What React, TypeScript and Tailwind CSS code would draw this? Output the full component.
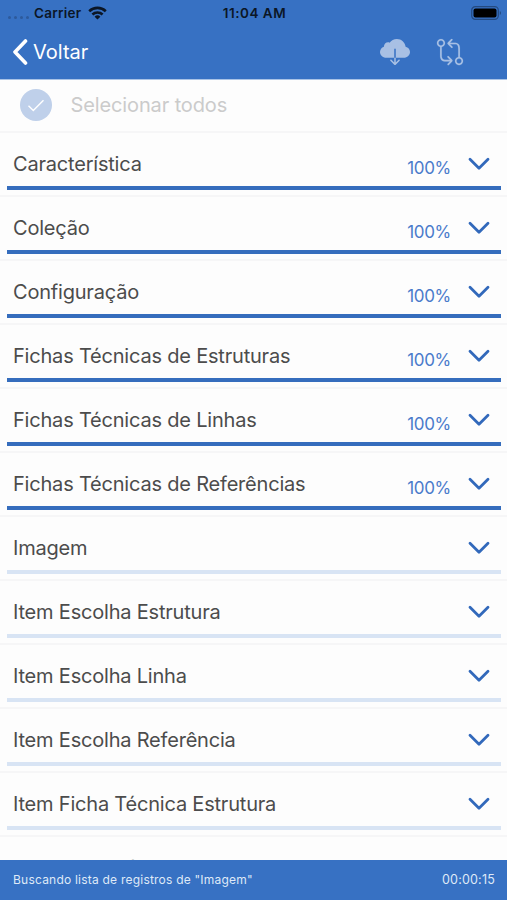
import { IoIosCloudDownload, IoIosGitCompare } from 'react-icons/io';

type Item = {
  name: string;
  progress: number;
};

const items: Item[] = [
  { name: 'Característica', progress: 100 },
  { name: 'Coleção', progress: 100 },
  { name: 'Configuração', progress: 100 },
  { name: 'Fichas Técnicas de Estruturas', progress: 100 },
  { name: 'Fichas Técnicas de Linhas', progress: 100 },
  { name: 'Fichas Técnicas de Referências', progress: 100 },
  { name: 'Imagem', progress: 0 },
  { name: 'Item Escolha Estrutura', progress: 0 },
  { name: 'Item Escolha Linha', progress: 0 },
  { name: 'Item Escolha Referência', progress: 0 },
  { name: 'Item Ficha Técnica Estrutura', progress: 0 },
  { name: 'Item Ficha Técnica Linha', progress: 0 },
];

function StatusBar() {
  return (
    <div className="grid h-[26px] grid-cols-3 items-center pl-2 pr-[5px] text-[13.5px] font-semibold text-[#0b1626]">
      <div className="flex items-center">
        <div className="mr-[5px] mt-2 flex gap-[3px]">
          {[0, 1, 2, 3].map(dot => (
            <span key={dot} className="size-[3px] rounded-full bg-[#2d5a9c]" />
          ))}
        </div>
        <span className="tracking-[0.25px]">Carrier</span>
        <svg className="ml-[7px] h-[14px] w-[19px]" viewBox="0 0 19 14" fill="none" stroke="currentColor" strokeWidth="2.6">
          <path d="M1.2 5.2a12 12 0 0 1 16.6 0" />
          <path d="M4.4 8.5a7.4 7.4 0 0 1 10.2 0" />
          <path d="M9.5 13.6 6.6 10.7a4.2 4.2 0 0 1 5.8 0z" fill="currentColor" stroke="none" />
        </svg>
      </div>
      <span className="pr-px text-center tracking-[0.5px]">11:04 AM</span>
      <svg className="h-[14px] w-[31px] justify-self-end" viewBox="0 0 31 14">
        <rect x="0.7" y="0.7" width="26.6" height="12.6" rx="3.6" fill="none" stroke="#244a80" strokeWidth="1.2" />
        <rect x="2.5" y="2.5" width="23" height="9" rx="2" fill="#000" />
        <path d="M28.8 5v4c1.6-.5 1.6-3.5 0-4z" fill="#244a80" />
      </svg>
    </div>
  );
}

function ItemRow({ item }: { item: Item }) {
  return (
    <li className="flex h-16 shrink-0 flex-col border-b-2 border-[#f6f6f7] pl-[7px] pr-[6px]">
      <div className="flex h-[53px] items-center pl-[6px] pr-[10px] pt-[9px]">
        <span className="flex-1 whitespace-nowrap text-[20px] tracking-[-0.2px] text-[#4c4c4c]">{item.name}</span>
        {item.progress > 0 && (
          <span className="mr-4 mt-[9px] text-[17px] tracking-[-0.3px] text-[#4a7bcb]">{item.progress}%</span>
        )}
        <svg className="h-[14px] w-6" viewBox="0 0 24 14" fill="none" stroke="#3269bb" strokeWidth="2.8" strokeLinecap="round" strokeLinejoin="round">
          <path d="M3 2.2 12 11.2 21 2.2" />
        </svg>
      </div>
      <div className="h-[3.5px] bg-[#d8e4f4]">
        <div className="h-full bg-[#356dbd]" style={{ width: `${item.progress}%` }} />
      </div>
    </li>
  );
}

export default function App() {
  return (
    <div className="flex h-[900px] w-[507px] flex-col overflow-hidden bg-[#fdfdfd] font-['Inter','Roboto',sans-serif]">
      <header className="h-20 shrink-0 border-b border-[#a9c3e6] bg-[#3771c3]">
        <StatusBar />
        <div className="flex h-[52px] items-center justify-between pl-3 pr-[42px]">
          <button className="flex items-center text-white">
            <svg className="mr-[5px] h-[26px] w-4" viewBox="0 0 16 26" fill="none" stroke="currentColor" strokeWidth="3.6" strokeLinecap="round" strokeLinejoin="round">
              <path d="M13.5 2 3 13 13.5 24" />
            </svg>
            <span className="text-[20px]">Voltar</span>
          </button>
          <div className="flex items-center gap-[25px] text-[#a8c0e4]">
            <IoIosCloudDownload size={30} />
            <IoIosGitCompare size={30} stroke="currentColor" strokeWidth={2} />
          </div>
        </div>
      </header>

      <div className="flex h-[53px] shrink-0 items-center border-b-2 border-[#f6f6f7] pb-px pl-5">
        <span className="flex size-8 items-center justify-center rounded-full bg-[#bfd0ea]">
          <svg className="h-[13px] w-[18px]" viewBox="0 0 18 13" fill="none" stroke="#fff" strokeWidth="1.4">
            <path d="M1.5 6.8 6.3 11.5 16.5 1.2" />
          </svg>
        </span>
        <span className="-mt-px ml-[18.5px] text-[20px] tracking-[-0.12px] text-[#cbcbcb]">Selecionar todos</span>
      </div>

      <ul className="flex min-h-0 flex-1 flex-col overflow-hidden">
        {items.map(item => (
          <ItemRow key={item.name} item={item} />
        ))}
      </ul>

      <footer className="flex h-10 shrink-0 items-center justify-between bg-[#3771c3] pl-[13px] pr-3 text-[12px] text-[#dfe9f7]">
        <span className="tracking-[0.22px]">Buscando lista de registros de "Imagem"</span>
        <span className="text-[12.5px] tracking-[0.2px]">00:00:15</span>
      </footer>
    </div>
  );
}
